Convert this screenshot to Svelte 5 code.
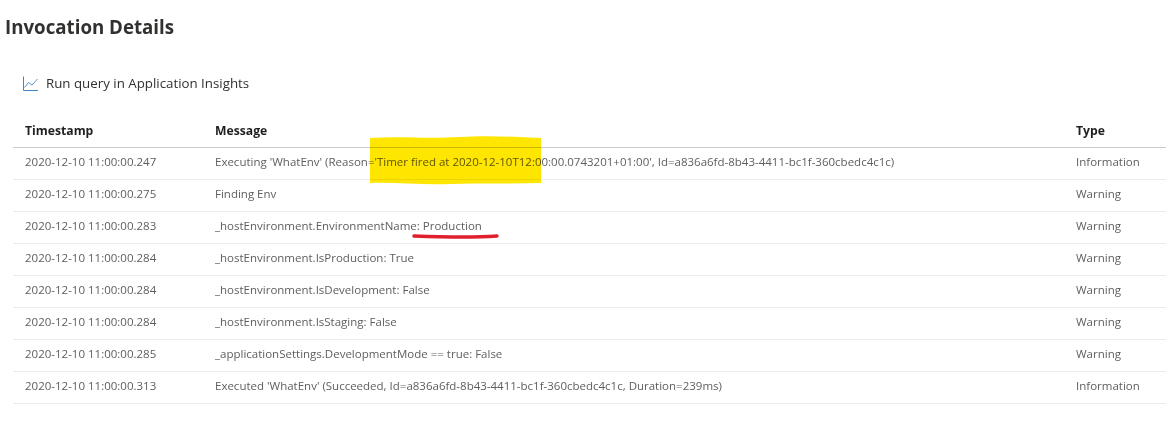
<script>
	const rows = [
		['2020-12-10 11:00:00.247', "Executing 'WhatEnv' (Reason='Timer fired at 2020-12-10T12:00:00.0743201+01:00', Id=a836a6fd-8b43-4411-bc1f-360cbedc4c1c)", 'Information'],
		['2020-12-10 11:00:00.275', 'Finding Env', 'Warning'],
		['2020-12-10 11:00:00.283', '_hostEnvironment.EnvironmentName: Production', 'Warning'],
		['2020-12-10 11:00:00.284', '_hostEnvironment.IsProduction: True', 'Warning'],
		['2020-12-10 11:00:00.284', '_hostEnvironment.IsDevelopment: False', 'Warning'],
		['2020-12-10 11:00:00.284', '_hostEnvironment.IsStaging: False', 'Warning'],
		['2020-12-10 11:00:00.285', '_applicationSettings.DevelopmentMode == true: False', 'Warning'],
		['2020-12-10 11:00:00.313', "Executed 'WhatEnv' (Succeeded, Id=a836a6fd-8b43-4411-bc1f-360cbedc4c1c, Duration=239ms)", 'Information'],
	]
</script>

<div class="page">
	<h1>Invocation Details</h1>

	<div class="toolbar">
		<svg width="15" height="15" viewBox="0 0 15 15" fill="none">
			<path d="M0.5 0.5V14.5H15" stroke="#3f86c4" />
			<path d="M1.5 11.5L5.5 6.5L9 9L14.5 3" stroke="#5a93c6" />
		</svg>
		<span>Run query in Application Insights</span>
	</div>

	<div class="table">
		<div class="row head">
			<div>Timestamp</div>
			<div>Message</div>
			<div>Type</div>
		</div>
		{#each rows as row}
			<div class="row">
				<div>{row[0]}</div>
				<div>{row[1]}</div>
				<div>{row[2]}</div>
			</div>
		{/each}
	</div>

	<!-- marker scribbles drawn on top of the screenshot -->
	<svg class="marks" width="1166" height="437" viewBox="0 0 1166 437">
		<path d="M370 138C400 136 425 139 460 137C490 135 515 137 541 138V183C510 184 480 183 450 184C420 185 395 182 370 183Z" fill="#ffe600" />
		<path d="M414 236C440 237 470 238 497 236" stroke="#e0202c" stroke-width="3.5" stroke-linecap="round" fill="none" />
	</svg>
</div>

<style>
	:global(body) {
		background: #fff;
	}

	.page {
		position: relative;
		width: 1166px;
		height: 437px;
		overflow: hidden;
		font-family: "Open Sans", "Noto Sans", sans-serif;
		color: #323130;
	}

	h1 {
		margin: 0;
		padding: 14px 0 0 5px;
		font-size: 18.7px;
		line-height: 26px;
		font-weight: 700;
	}

	.toolbar {
		display: flex;
		align-items: center;
		gap: 8px;
		margin-top: 33px;
		padding-left: 23px;
		height: 20px;
		font-size: 13.3px;
		color: #323130;
	}

	.table {
		margin: 22px 0 0 13px;
		font-size: 11.5px;
		color: #605e5c;
	}

	.row {
		display: grid;
		grid-template-columns: 190px 861px 1fr;
		align-items: center;
		height: 27px;
		padding-left: 12px;
		padding-bottom: 4px;
		box-sizing: content-box;
		border-bottom: 1px solid #edebe9;
		white-space: nowrap;
	}

	.head {
		height: 30px;
		padding-bottom: 2px;
		border-bottom-color: #c8ccd0;
		font-size: 12.2px;
		font-weight: 700;
		color: #201f1e;
	}

	.marks {
		position: absolute;
		left: 0;
		top: 0;
		mix-blend-mode: multiply;
	}
</style>
